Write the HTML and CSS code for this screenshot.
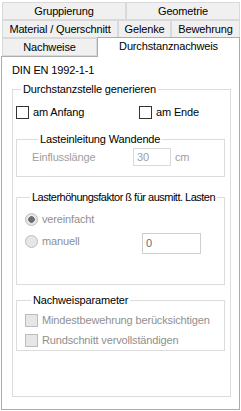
FILE: index.html
```html
<!DOCTYPE html>
<html lang="de">
<head>
    <meta charset="UTF-8">
    <title>Durchstanznachweis</title>
    <link rel="stylesheet" href="styles.css">
</head>
<body>
    <div class="tabs">
        <div class="tabrow">
            <div class="tab w-grupp">Gruppierung</div>
            <div class="tab w-geo">Geometrie</div>
        </div>
        <div class="tabrow">
            <div class="tab w-mat">Material / Querschnitt</div>
            <div class="tab w-gel">Gelenke</div>
            <div class="tab w-bew">Bewehrung</div>
        </div>
        <div class="tabrow">
            <div class="tab w-nach">Nachweise</div>
            <div class="tab tab-active">Durchstanznachweis</div>
        </div>
    </div>

    <div class="panel">
        <div class="norm">DIN EN 1992-1-1</div>

        <fieldset class="group outer">
            <legend>Durchstanzstelle generieren</legend>
            <div class="checkrow">
                <div class="check w-anfang"><span class="box"></span>am Anfang</div>
                <div class="check"><span class="box"></span>am Ende</div>
            </div>

            <fieldset class="group inner load">
                <legend>Lasteinleitung Wandende</legend>
                <div class="fieldrow">
                    <span class="flabel">Einflusslänge</span>
                    <span class="input short">30</span>
                    <span class="unit">cm</span>
                </div>
            </fieldset>

            <fieldset class="group inner beta">
                <legend>Lasterhöhungsfaktor ß für ausmitt. Lasten</legend>
                <div class="opt"><span class="radio checked"></span>vereinfacht</div>
                <div class="optrow">
                    <div class="opt w-opt"><span class="radio"></span>manuell</div>
                    <span class="input wide">0</span>
                </div>
            </fieldset>

            <fieldset class="group inner params">
                <legend>Nachweisparameter</legend>
                <div class="check off"><span class="box"></span>Mindestbewehrung berücksichtigen</div>
                <div class="check off second"><span class="box"></span>Rundschnitt vervollständigen</div>
            </fieldset>
        </fieldset>
    </div>
</body>
</html>
```

FILE: styles.css
```css
/* basis */
*{
    box-sizing: border-box;
}
body{
    margin: 0;
    background: #fff;
    color: #000;
    font-family: "Liberation Sans", Arial, sans-serif;
    font-size: 11px;
    line-height: 13px;
    letter-spacing: -0.15px;
}

/* reiter oben */
.tabs{
    padding: 2px 0 0 2px;
    width: 241px;
}
.tabrow{
    display: flex;
    height: 18px;
}
.tab{
    height: 18px;
    border: 1px solid #d9d9d9;
    background: #f0f0f0;
    text-align: center;
    line-height: 16px;
    white-space: nowrap;
}
.w-grupp{ width: 124px; }
.w-geo{ width: 114px; }
.w-mat{ width: 116px; }
.w-gel{ width: 53px; }
.w-bew{ width: 69px; }
.w-nach{ width: 95px; }

.tab-active{
    width: 143px;
    height: 20px;
    margin-top: -1px;
    background: #fff;
    border-color: #acacac;
    border-bottom: 0;
    position: relative;
    z-index: 1;
}

/* inhalt */
.panel{
    margin-left: 1px;
    width: 239px;
    height: 354px;
    border: 1px solid #acacac;
    padding: 7px 8px 0 10px;
}

.group{
    margin: 0;
    padding: 0;
    min-width: 0;
    border: 1px solid #dcdcdc;
}
.group legend{
    padding: 0 2px;
    line-height: 13px;
    white-space: nowrap;
}

.outer{
    margin-top: 6px;
    width: 219px;
    padding: 0 5px 45px 3px;
}
.outer > legend{
    margin-left: 5px;
}

.inner{
    width: 209px;
}
.inner > legend{
    margin-left: 6px;
}

/* checkboxen */
.checkrow{
    display: flex;
    margin-top: 10px;
}
.check{
    display: flex;
    align-items: center;
    gap: 4px;
    height: 13px;
    white-space: nowrap;
}
.w-anfang{ width: 123px; }
.box{
    width: 13px;
    height: 13px;
    border: 1px solid #333;
    background: #fff;
    flex: none;
}
.check.off{
    color: #8f8f8f;
}
.check.off .box{
    border-color: #bcbcbc;
    background: #e6e6e6;
}

/* lasteinleitung */
.load{
    margin-top: 14px;
    padding: 2px 0 10px 15px;
}
.fieldrow{
    display: flex;
    align-items: center;
    height: 18px;
    color: #a0a0a0;
}
.flabel{
    width: 101px;
}
.input{
    border: 1px solid #d9d9d9;
    background: #fff;
    padding-left: 3px;
}
.input.short{
    width: 38px;
    height: 18px;
    line-height: 16px;
}
.unit{
    margin-left: 4px;
}

/* beta */
.beta{
    margin-top: 14px;
    padding: 9px 0 30px 8px;
}
.beta > legend{
    margin-left: 5px;
    letter-spacing: -0.5px;
}
.opt{
    display: flex;
    align-items: center;
    gap: 4px;
    height: 13px;
    color: #8f8f8f;
}
.optrow{
    display: flex;
    align-items: flex-start;
    margin-top: 7px;
}
.w-opt{
    width: 117px;
    margin-top: 2px;
}
.radio{
    width: 13px;
    height: 13px;
    border-radius: 50%;
    border: 1px solid #bcbcbc;
    background: #e6e6e6;
    flex: none;
}
.radio.checked{
    background: radial-gradient(circle, #6f6f6f 0 3px, #e6e6e6 3.6px);
}
.input.wide{
    width: 59px;
    height: 21px;
    line-height: 19px;
    color: #6d6d6d;
    border-color: #cfcfcf;
}

/* nachweisparameter */
.params{
    margin-top: 9px;
    padding: 7px 0 3px 8px;
}
.check.second{
    margin-top: 7px;
}
```
